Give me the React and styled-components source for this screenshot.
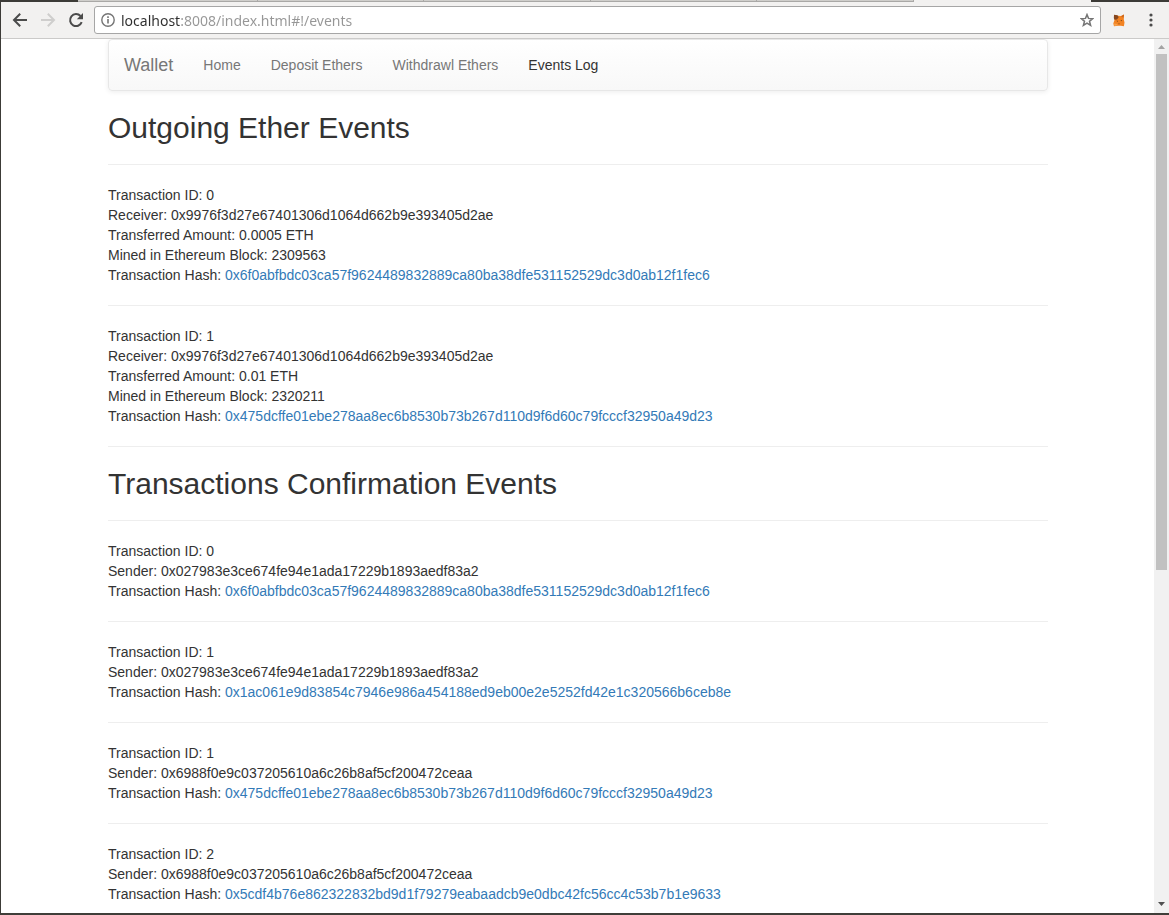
import React from "react";
import styled, { createGlobalStyle } from "styled-components";

const GlobalStyle = createGlobalStyle`
  *, *::before, *::after { box-sizing: border-box; }
  body {
    margin: 0;
    background: #fff;
    color: #333;
    font: 14px/20px "Liberation Sans", Arial, sans-serif;
  }
`;

const Window = styled.div`
  display: flex;
  flex-direction: column;
  height: 100vh;
  overflow: hidden;
  border-left: 1px solid #3c3b37;
  border-bottom: 2px solid #3f3e39;
`;

const TabStrip = styled.div`
  display: flex;
  flex: none;
  height: 2px;
  background: #3c3b37;
`;

const ActiveTab = styled.div`
  width: 177px;
  background: #f2f1f0;
`;

const TitleEdge = styled.div`
  width: ${(p) => p.$width}px;
`;

const Tab = styled.div`
  flex: 1 1 ${(p) => p.$extra || 0}px;
  background: #cfcecb;
  border-bottom: 1px solid #a9a8a6;
  border-right: 1px solid #a9a8a6;
`;

const Toolbar = styled.div`
  display: flex;
  flex: none;
  align-items: center;
  height: 37px;
  padding-left: 7px;
  background: #f2f1f0;
  border-bottom: 1px solid #cbcac9;
`;

const IconButton = styled.button`
  display: flex;
  align-items: center;
  justify-content: center;
  flex: none;
  width: ${(p) => p.$width || 28}px;
  height: 28px;
  padding: 0;
  border: 0;
  background: none;
  color: ${(p) => p.$color || "#4b4b4b"};
`;

const AddressBar = styled.form`
  display: flex;
  flex: 1;
  align-items: center;
  height: 28px;
  margin: 0 4px 0 6px;
  background: #fff;
  border: 1px solid #a6a6a6;
  border-radius: 3px;
`;

const AddressInput = styled.input`
  flex: 1;
  min-width: 0;
  height: 24px;
  padding: 0;
  border: 0;
  outline: 0;
  font: 14px/20px "Noto Sans", sans-serif;
  color: transparent;
  background: linear-gradient(to right, #2e2e2e 59px, #969696 59px);
  background-clip: text;
  -webkit-background-clip: text;
`;

const Viewport = styled.div`
  display: flex;
  flex: 1;
  min-height: 0;
`;

const Page = styled.div`
  flex: 1;
  min-width: 0;
  padding-left: 1px;
  overflow: hidden;
`;

const Container = styled.div`
  max-width: 970px;
  margin: 0 auto;
  padding: 0 15px;
`;

const Navbar = styled.nav`
  display: flex;
  min-height: 52px;
  margin-bottom: 20px;
  background: linear-gradient(to bottom, #fff 0%, #f8f8f8 100%);
  border: 1px solid #e7e7e7;
  border-radius: 4px;
  box-shadow: inset 0 1px 0 rgba(255, 255, 255, 0.15), 0 1px 5px rgba(0, 0, 0, 0.075);
`;

const NavLink = styled.a`
  padding: 15px;
  color: ${(p) => (p.$active ? "#333" : "#777")};
  font-size: ${(p) => (p.$brand ? 18 : 14)}px;
  text-decoration: none;
`;

const Heading = styled.h2`
  margin: 20px 0 10px;
  font-size: 30px;
  line-height: 33px;
  font-weight: 500;
`;

const Rule = styled.hr`
  height: 0;
  margin: 20px 0;
  border: 0;
  border-top: 1px solid #eee;
`;

const Line = styled.div`
  white-space: nowrap;
`;

const HashLink = styled.a`
  color: #337ab7;
  text-decoration: none;
`;

const Scrollbar = styled.div`
  display: flex;
  flex-direction: column;
  align-items: center;
  flex: none;
  width: 15px;
  padding-bottom: 2px;
  background: #f1f1f1;
`;

const ScrollArrow = styled.div`
  display: flex;
  align-items: center;
  justify-content: center;
  flex: none;
  height: 15px;
`;

const ScrollTrack = styled.div`
  flex: 1;
  width: 11px;
`;

const ScrollThumb = styled.div`
  height: 61.3%;
  background: #c1c1c1;
`;

const BackIcon = () => (
  <svg width="16" height="16" viewBox="0 0 16 16" fill="none" stroke="currentColor" strokeWidth="2">
    <path d="M15 8H2.500M8.200 1.800L2 8l6.200 6.200" />
  </svg>
);

const ForwardIcon = () => (
  <svg width="16" height="16" viewBox="0 0 16 16" fill="none" stroke="currentColor" strokeWidth="2">
    <path d="M1 8h12.500M7.800 1.800L14 8l-6.200 6.200" />
  </svg>
);

const ReloadIcon = () => (
  <svg width="16" height="16" viewBox="0 0 16 16">
    <path d="M13.700 10.200A6 6 0 1 1 12.500 4" fill="none" stroke="currentColor" strokeWidth="2" />
    <path d="M15 1v6.200H8.800z" fill="currentColor" />
  </svg>
);

const InfoIcon = () => (
  <svg width="14" height="14" viewBox="0 0 14 14">
    <circle cx="7" cy="7" r="6.200" fill="none" stroke="currentColor" strokeWidth="1.400" />
    <path d="M6.200 3.300h1.600v1.600H6.200zM6.200 6h1.600v4.600H6.200z" fill="currentColor" />
  </svg>
);

const StarIcon = () => (
  <svg width="14" height="14" viewBox="0 0 14 14">
    <path
      d="M7 1.600l1.500 3.800 4.200.3-3.200 2.600 1.100 4.100L7 10.200l-3.600 2.200 1.100-4.100L1.300 5.700l4.200-.3z"
      fill="none"
      stroke="currentColor"
      strokeWidth="1.500"
    />
  </svg>
);

const FoxIcon = () => (
  <svg width="12" height="13" viewBox="0 0 12 13">
    <path d="M1 1l4 .8L8 2l3-1.500-.2 5 .7 3-.6 3.700-3-.5H5l-4 .5L.3 9.500 1.500 6z" fill="#f28322" />
    <path d="M1 .8l3.500.4 1.200 2L4 5.500l-2.500.3L.8 4z" fill="#85471f" />
    <path d="M8 2.200L11 .5l-.6 3.200z" fill="#c9651d" />
    <path d="M3.500 6.500l1.600.6-.8.6zM7.500 6.500l1.700-.5-.8 1.200z" fill="#5d3519" />
    <path d="M5.300 9.500h1.400l-.7.900z" fill="#5d3519" />
    <path d="M1 9.500l3 .5 1 1.200-3.500.7z" fill="#f7a04b" />
  </svg>
);

const MenuIcon = () => (
  <svg width="4" height="14" viewBox="0 0 4 14" fill="currentColor">
    <circle cx="2" cy="2" r="1.600" />
    <circle cx="2" cy="7" r="1.600" />
    <circle cx="2" cy="12" r="1.600" />
  </svg>
);

const NAV = ["Home", "Deposit Ethers", "Withdrawl Ethers", "Events Log"];

const RECEIVER = "0x9976f3d27e67401306d1064d662b9e393405d2ae";
const HASH_A = "0x6f0abfbdc03ca57f9624489832889ca80ba38dfe531152529dc3d0ab12f1fec6";
const HASH_B = "0x475dcffe01ebe278aa8ec6b8530b73b267d110d9f6d60c79fcccf32950a49d23";

const OUTGOING = [
  { id: 0, receiver: RECEIVER, amount: "0.0005", block: 2309563, hash: HASH_A },
  { id: 1, receiver: RECEIVER, amount: "0.01", block: 2320211, hash: HASH_B },
];

const CONFIRMATIONS = [
  { id: 0, sender: "0x027983e3ce674fe94e1ada17229b1893aedf83a2", hash: HASH_A },
  {
    id: 1,
    sender: "0x027983e3ce674fe94e1ada17229b1893aedf83a2",
    hash: "0x1ac061e9d83854c7946e986a454188ed9eb00e2e5252fd42e1c320566b6ceb8e",
  },
  { id: 1, sender: "0x6988f0e9c037205610a6c26b8af5cf200472ceaa", hash: HASH_B },
  {
    id: 2,
    sender: "0x6988f0e9c037205610a6c26b8af5cf200472ceaa",
    hash: "0x5cdf4b76e862322832bd9d1f79279eabaadcb9e0dbc42fc56cc4c53b7b1e9633",
  },
];

function EventEntry({ event }) {
  return (
    <>
      <Line>Transaction ID: {event.id}</Line>
      {event.receiver && <Line>Receiver: {event.receiver}</Line>}
      {event.sender && <Line>Sender: {event.sender}</Line>}
      {event.amount && <Line>Transferred Amount: {event.amount} ETH</Line>}
      {event.block && <Line>Mined in Ethereum Block: {event.block}</Line>}
      <Line>
        Transaction Hash: <HashLink href={`#tx-${event.hash}`}>{event.hash}</HashLink>
      </Line>
      <Rule />
    </>
  );
}

function EventSection({ title, events }) {
  return (
    <section>
      <Heading>{title}</Heading>
      <Rule />
      {events.map((event, i) => (
        <EventEntry key={i} event={event} />
      ))}
    </section>
  );
}

export default function App() {
  return (
    <Window>
      <GlobalStyle />
      <TabStrip>
        <TitleEdge $width={77} />
        <Tab $extra={24} />
        <Tab $extra={11} />
        <Tab $extra={11} />
        <Tab $extra={11} />
        <Tab />
        <ActiveTab />
        <TitleEdge $width={78} />
      </TabStrip>
      <Toolbar>
        <IconButton type="button" aria-label="Back" $width={24}><BackIcon /></IconButton>
        <IconButton type="button" aria-label="Forward" $width={32} $color="#cfcecd"><ForwardIcon /></IconButton>
        <IconButton type="button" aria-label="Reload" $width={24}><ReloadIcon /></IconButton>
        <AddressBar onSubmit={(e) => e.preventDefault()}>
          <IconButton type="button" aria-label="Site information" $width={26} $color="#757575"><InfoIcon /></IconButton>
          <AddressInput aria-label="Address" defaultValue="localhost:8008/index.html#!/events" spellCheck={false} />
          <IconButton type="button" aria-label="Bookmark this page" $width={26} $color="#757575"><StarIcon /></IconButton>
        </AddressBar>
        <IconButton type="button" aria-label="Wallet extension"><FoxIcon /></IconButton>
        <IconButton type="button" aria-label="Menu" $width={36}><MenuIcon /></IconButton>
      </Toolbar>
      <Viewport>
        <Page>
          <Container>
            <Navbar>
              <NavLink href="#home" $brand>Wallet</NavLink>
              {NAV.map((label) => (
                <NavLink key={label} href="#events" $active={label === "Events Log"}>{label}</NavLink>
              ))}
            </Navbar>
            <main>
              <EventSection title="Outgoing Ether Events" events={OUTGOING} />
              <EventSection title="Transactions Confirmation Events" events={CONFIRMATIONS} />
            </main>
          </Container>
        </Page>
        <Scrollbar aria-hidden="true">
          <ScrollArrow>
            <svg width="7" height="4" viewBox="0 0 7 4"><path d="M0 4L3.500 0 7 4z" fill="#a3a3a3" /></svg>
          </ScrollArrow>
          <ScrollTrack><ScrollThumb /></ScrollTrack>
          <ScrollArrow>
            <svg width="7" height="4" viewBox="0 0 7 4"><path d="M0 0h7L3.500 4z" fill="#505050" /></svg>
          </ScrollArrow>
        </Scrollbar>
      </Viewport>
    </Window>
  );
}
